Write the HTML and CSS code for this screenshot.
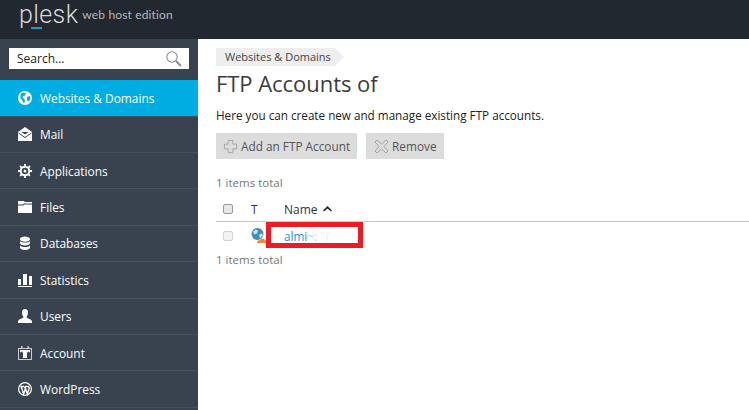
FILE: index.html
```html
<!DOCTYPE html>
<html lang="en">
<head>
    <meta charset="UTF-8">
    <meta name="viewport" content="width=device-width, initial-scale=1.0">
    <title>FTP Accounts</title>

    <link rel="stylesheet" href="styles.css">
</head>
<body>

    <header class="topbar">
        <span class="logo">plesk<span class="logo-bar"></span></span>
        <span class="edition">web host edition</span>
    </header>

    <div class="layout">
        <nav class="sidebar">
            <div class="search-wrap">
                <div class="search">
                    <span>Search...</span>
                    <svg width="17" height="17" viewBox="0 0 17 17" fill="none" stroke="#8a8a8a">
                        <circle cx="7" cy="7" r="5.2" stroke-width="1.1"/>
                        <path d="M11 11l5 5" stroke-width="1.8"/>
                    </svg>
                </div>
            </div>
            <a class="item active">
                <svg class="icon" viewBox="0 0 14 14"><circle cx="7" cy="7" r="7" fill="#fff"/><path d="M3 2.500l3-1 2 1-1 2-2 .5-.5 2 2 1 .5 3-1.500 1-1-2.500-2-2 0-2.500zM9 6l3-1 .5 3-2 2.500-1.500-1.500z" fill="#00ade2"/></svg>
                Websites &amp; Domains
            </a>
            <a class="item">
                <svg class="icon" viewBox="0 0 14 14"><path d="M7 0l7 5v9H0V5z" fill="#fff"/><path d="M3.500 5h7L7 7.500z" fill="#39434f"/><path d="M.5 6L7 10.500 13.500 6" fill="none" stroke="#39434f"/></svg>
                Mail
            </a>
            <a class="item">
                <svg class="icon" viewBox="0 0 14 14"><circle cx="7" cy="7" r="4.300" fill="none" stroke="#fff" stroke-width="2"/><circle cx="7" cy="7" r="1.500" fill="#fff"/><path d="M7 0v14M0 7h14M2 2l10 10M12 2L2 12" stroke="#fff" stroke-width="1.800" stroke-dasharray="2.400 9.200"/></svg>
                Applications
            </a>
            <a class="item">
                <svg class="icon" viewBox="0 0 14 12"><path d="M0 0h6l1 1h7v1.500H6L5 3.500H0zM0 4.500h5.500l1-1H14V12H0z" fill="#fff"/></svg>
                Files
            </a>
            <a class="item">
                <svg class="icon" viewBox="0 0 14 14"><path d="M2 3c0-3.500 10-3.500 10 0s-10 3.500-10 0zM2 5c2 2 8 2 10 0v2.500c-1 2.500-9 2.500-10 0zM2 9.500c2 2 8 2 10 0V12c-1 2.500-9 2.500-10 0z" fill="#fff"/></svg>
                Databases
            </a>
            <a class="item">
                <svg class="icon" viewBox="0 0 14 14"><path d="M0 6h3v6H0zM5 1h4v11H5zM11 3h3v9h-3zM0 13h14v1H0z" fill="#fff"/></svg>
                Statistics
            </a>
            <a class="item">
                <svg class="icon" viewBox="0 0 14 14"><path d="M7 0c2 0 3 1.500 3 3.500S9 7 8.500 8c0 1.500 5.500 2 5.500 4.500V14H0v-1.500C0 10 5.500 9.500 5.500 8 5 7 4 5.500 4 3.500S5 0 7 0z" fill="#fff"/></svg>
                Users
            </a>
            <a class="item">
                <svg class="icon" viewBox="0 0 14 14"><path d="M0 2h3V0h1.500v2h5V0H11v2h3v12H0zM1 3v10h12V3z" fill="#c9cdd2"/><path d="M2 4h10v2.500L10 5.500 9 7v5H5V7L4 5.500 2 6.500z" fill="#fff"/></svg>
                Account
            </a>
            <a class="item">
                <svg class="icon" viewBox="0 0 14 14"><circle cx="7" cy="7" r="6.400" fill="none" stroke="#fff" stroke-width="1.200"/><path d="M2.200 4.500h3.800M7.300 4.500h3.900M3.200 4.500l2.400 7.500 1.800-5.200-1-2.300M6.800 4.500l2.500 7.500 1.700-5c.3-1-.2-2-.6-2.500" fill="none" stroke="#fff" stroke-width="1.400"/></svg>
                WordPress
            </a>
        </nav>

        <main class="content">
            <div class="crumbs"><span class="crumb">Websites &amp; Domains</span></div>
            <h1>FTP Accounts of</h1>
            <p class="hint">Here you can create new and manage existing FTP accounts.</p>
            <div class="tools">
                <button class="btn">
                    <svg width="15" height="15" viewBox="0 0 16 16" fill="none" stroke="#a3a3a3"><path d="M5.500 1.500h5v4h4v5h-4v4h-5v-4h-4v-5h4z"/></svg>
                    Add an FTP Account
                </button>
                <button class="btn">
                    <svg class="remove-icon" width="15" height="15" viewBox="0 0 15 15" fill="none" stroke="#a3a3a3"><path d="M3 1l4.500 4L12 1l2 2-4 4.500 4 4.500-2 2-4.500-4L3 14l-2-2 4-4.500L1 3z"/></svg>
                    Remove
                </button>
            </div>
            <div class="total">1 items total</div>
            <div class="row head">
                <span class="cell-check"><span class="check"></span></span>
                <span class="cell-type">T</span>
                <span class="cell-name">Name <svg width="9" height="6" viewBox="0 0 9 6"><path d="M4.500 0L9 4.500 8 5.500 4.500 2.500 1 5.500 0 4.500z" fill="#222"/></svg></span>
            </div>
            <div class="row body">
                <span class="cell-check"><span class="check faint"></span></span>
                <span class="cell-type">
                    <svg width="16" height="15" viewBox="0 0 16 15"><circle cx="6.500" cy="6" r="6" fill="#3d8fc0"/><path d="M2 3.500l3-2 2 1-1 3-3 1zM8 6.500l3-1 1 2-3 3z" fill="#cfe3ee"/><path d="M6 15c0-2 1-3 3-3l1-1h3l1 1c1 0 2 1 2 3z" fill="#f08a3c"/></svg>
                </span>
                <span class="cell-name link">almi<span class="smudge">~:</span><span class="smudge pale"> ''i'</span></span>
                <span class="redbox"></span>
            </div>
            <div class="total bottom">1 items total</div>
        </main>
    </div>

</body>
</html>
```

FILE: styles.css
```css
html, body {
    margin: 0;
    padding: 0;
    height: 410px;
    overflow: hidden;
    font-family: "Open Sans", sans-serif;
    background: #fff;
}

.topbar {
    height: 39px;
    box-sizing: border-box;
    background: #22282f;
    display: flex;
    align-items: flex-start;
    padding-left: 19px;
    color: #c4c6c8;
}

.logo {
    position: relative;
    font-family: "Roboto", sans-serif;
    font-weight: 300;
    font-size: 25px;
    letter-spacing: .4px;
    line-height: 30px;
    color: #d8dadc;
}

.logo-bar {
    position: absolute;
    left: 12px;
    top: 27px;
    width: 11px;
    height: 2px;
    background: #1b9cb8;
}

.edition {
    font-family: "Lato", sans-serif;
    font-size: 12px;
    letter-spacing: .15px;
    margin-left: 4px;
    margin-top: 7px;
    color: #b4b7ba;
}

.layout {
    display: flex;
    height: 371px;
}

.sidebar {
    width: 198px;
    flex: none;
    background: #39434f;
}

.search-wrap {
    height: 41px;
    box-sizing: border-box;
    padding: 9px 9px 0;
}

.search {
    height: 21px;
    background: #fff;
    display: flex;
    align-items: center;
    justify-content: space-between;
    padding: 0 7px 0 8px;
    font-size: 12px;
    color: #222;
}

.item {
    display: flex;
    align-items: center;
    height: 36.4px;
    box-sizing: border-box;
    padding-left: 18px;
    font-size: 11.9px;
    color: #fff;
    border-bottom: 1px solid #47525f;
}

.item.active {
    height: 36.6px;
    padding-top: 1px;
    background: #00ade2;
}

.icon {
    width: 14px;
    height: 14px;
    margin-right: 8px;
    flex: none;
}

.content {
    flex: 1;
    padding: 9px 0 0 18px;
    min-width: 0;
}

.crumbs {
    display: flex;
    height: 18px;
}

.crumb {
    position: relative;
    height: 18px;
    line-height: 18px;
    padding: 0 4px 0 9px;
    background: #eeeeee;
    font-size: 11px;
    color: #444;
}

.crumb::after {
    content: "";
    position: absolute;
    left: 100%;
    top: 0;
    border-left: 9px solid #eeeeee;
    border-top: 9px solid transparent;
    border-bottom: 9px solid transparent;
}

h1 {
    margin: 2px 0 0;
    font-weight: 400;
    font-size: 22px;
    letter-spacing: -.05px;
    line-height: 30px;
    color: #3c3c3c;
}

.hint {
    margin: 9px 0 0;
    font-size: 11.7px;
    line-height: 17px;
    color: #222;
}

.tools {
    display: flex;
    gap: 9px;
    margin-top: 9px;
}

.btn {
    display: flex;
    align-items: center;
    gap: 3px;
    height: 26px;
    border: 0;
    margin: 0;
    padding: 0 7px;
    background: #dcdcdc;
    font-family: inherit;
    font-size: 11.8px;
    color: #555;
}

.remove-icon {
    margin-left: 1px;
}

.total {
    margin-top: 15px;
    font-size: 11.5px;
    line-height: 17px;
    color: #777;
}

.total.bottom {
    margin-top: 2px;
}

.row {
    display: flex;
    align-items: center;
    position: relative;
}

.head {
    height: 24px;
    margin-top: 6px;
    border-bottom: 1px solid #c8cccc;
    font-size: 12px;
    color: #333;
}

.body {
    height: 27px;
    font-size: 11.7px;
}

.cell-check {
    width: 35px;
    padding-left: 7px;
    box-sizing: border-box;
    display: flex;
}

.check {
    width: 8px;
    height: 8px;
    border: 1px solid #999;
    border-radius: 2px;
    background: #e8e8e8;
}

.check.faint {
    border-color: #d4d4d4;
    background: #f2f2f2;
}

.cell-type {
    width: 33px;
    display: flex;
}

.cell-name svg {
    margin-left: 2px;
    vertical-align: 2px;
}

.link {
    color: #2b8fd6;
    white-space: pre;
    position: relative;
    z-index: 1;
}

.smudge {
    color: #a9d3f2;
}

.smudge.pale {
    color: #e2f0fb;
}

.redbox {
    position: absolute;
    left: 50px;
    top: 0;
    width: 87px;
    height: 16px;
    border: 5px solid #ed1c24;
}
```
